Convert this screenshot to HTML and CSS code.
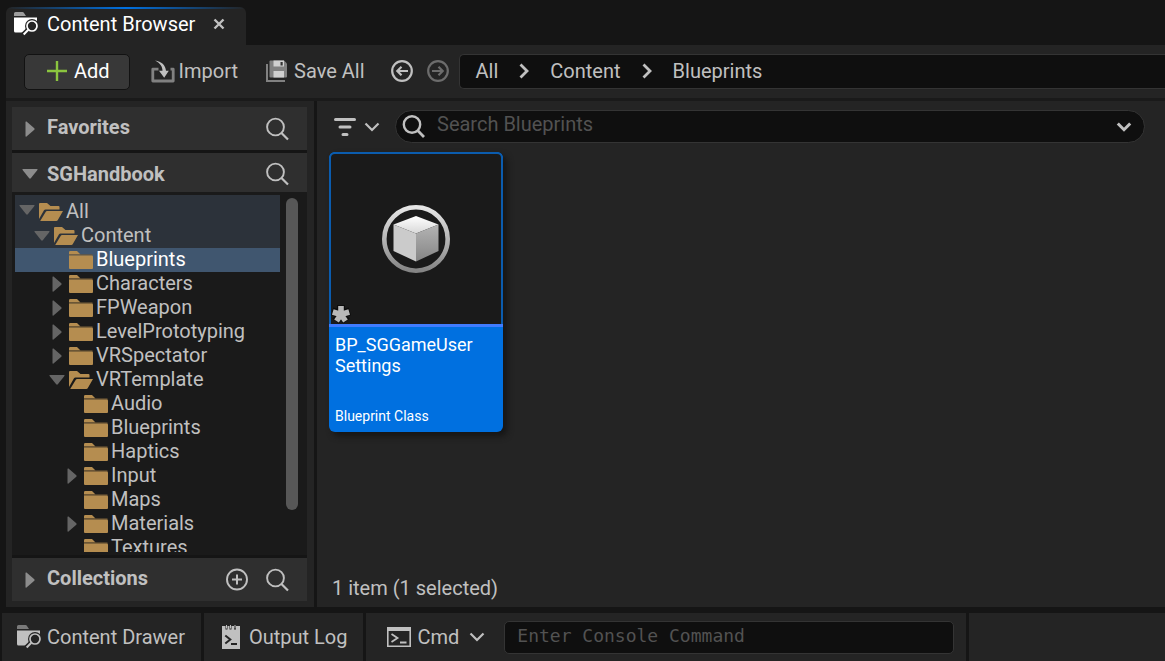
FILE: index.html
```html
<!DOCTYPE html>
<html lang="en">
<head>
<meta charset="utf-8">
<title>Content Browser</title>
<link rel="stylesheet" href="styles.css">
</head>
<body>
<svg class="sprite" aria-hidden="true">
  <defs>
    <mask id="lens-cut"><rect width="24" height="24" fill="#fff"/><circle cx="18" cy="14" r="7" fill="#000"/><path d="M14 18l-6 6" stroke="#000" stroke-width="5"/></mask>
    <linearGradient id="ring" x1="0" y1="0" x2="0" y2="1"><stop offset="0" stop-color="#e6e6e6"/><stop offset="1" stop-color="#858585"/></linearGradient>
    <linearGradient id="cube-top" x1="0" y1="0" x2="0" y2="1"><stop offset="0" stop-color="#fff"/><stop offset="1" stop-color="#d8d8d8"/></linearGradient>
    <linearGradient id="cube-side" x1="0" y1="0" x2="0" y2="1"><stop offset="0" stop-color="#b4b4b4"/><stop offset="1" stop-color="#858585"/></linearGradient>
  </defs>
  <symbol id="i-browser" viewBox="0 0 24 24">
    <path d="M0 4V1.500Q0 0 1.500 0H8.500Q9.500 0 10 1L12 4z" fill="currentColor" opacity=".55"/>
    <path d="M0 5.500H23V8Q24 20.500 9 20.500H1.500Q0 20.500 0 19z" fill="currentColor" mask="url(#lens-cut)"/>
    <circle cx="18" cy="14" r="5" fill="none" stroke="currentColor" stroke-width="1.700"/>
    <path d="M14.300 17.700L9.700 22.500" stroke="currentColor" stroke-width="2"/>
  </symbol>
  <symbol id="i-search" viewBox="0 0 24 24">
    <circle cx="10.500" cy="10" r="8.400" fill="none" stroke="currentColor" stroke-width="1.900"/>
    <path d="M16.500 16l6.500 6.500" stroke="currentColor" stroke-width="2.200"/>
  </symbol>
  <symbol id="i-search-bold" viewBox="0 0 24 24">
    <circle cx="11" cy="9.500" r="8.200" fill="none" stroke="currentColor" stroke-width="2.400"/>
    <path d="M16.700 15.500l6.300 6.500" stroke="currentColor" stroke-width="2.700"/>
  </symbol>
  <symbol id="i-right" viewBox="0 0 16 16"><path d="M3.500 1Q3.500 0 4.500 .6L12.300 7.200Q13 8 12.300 8.800L4.500 15.400Q3.500 16 3.500 15z" fill="currentColor"/></symbol>
  <symbol id="i-down" viewBox="0 0 16 16"><path d="M1 3Q0 3 .6 4L7.200 12.300Q8 13 8.800 12.300L15.400 4Q16 3 15 3z" fill="currentColor"/></symbol>
  <symbol id="i-folder" viewBox="0 0 24 18">
    <path d="M0 3.400V1.200Q0 0 1.200 0H8L11.500 3.400z" fill="#b58d50"/>
    <path d="M0 3.400H23.500V4.600H0z" fill="#6e5836"/>
    <path d="M0 4.600H23Q24 4.600 24 5.600V17Q24 18 23 18H1Q0 18 0 17z" fill="#b58d50"/>
  </symbol>
  <symbol id="i-folder-open" viewBox="0 0 24 18">
    <path d="M0 16V1Q0 0 1 0H8L11.500 3H19.500Q20.500 3 20.500 4V6.500H6.500Q5.500 6.500 5 7.300z" fill="#b58d50"/>
    <path d="M1.200 18L6.800 8.800Q7.200 8 8 8H24L18.700 17.200Q18.200 18 17.400 18z" fill="#b58d50"/>
  </symbol>
  <symbol id="i-chevron" viewBox="0 0 16 10"><path d="M1.500 1.500L8 8l6.500-6.500" fill="none" stroke="currentColor" stroke-width="2.200"/></symbol>
  <symbol id="i-chevron-bold" viewBox="0 0 16 10"><path d="M1.800 1.500L8 7.700l6.200-6.200" fill="none" stroke="currentColor" stroke-width="3"/></symbol>
</svg>

<div class="app">
  <header class="tabs">
    <div class="tab">
      <svg class="icon24"><use href="#i-browser"/></svg>
      <span class="tab-title">Content Browser</span>
      <button class="tab-close" aria-label="Close tab"><svg class="close-icon" viewBox="0 0 12 12"><path d="M1.500 1.500l9 9M10.500 1.500l-9 9" stroke="currentColor" stroke-width="2.400"/></svg></button>
    </div>
  </header>

  <div class="toolbar">
    <button class="add"><svg class="plus" viewBox="0 0 20 20"><path d="M10 0v20M0 10h20" stroke="#8bc53f" stroke-width="2.400"/></svg>Add</button>
    <button class="tool import">
      <svg class="icon24" viewBox="0 0 24 24"><path d="M7.500 10.200H1.800V22H22.200V10.200H19.500" fill="none" stroke="currentColor" stroke-width="2.800" stroke-linejoin="round" opacity=".6"/><path d="M4 1.500C10.500 2.500 14.500 6 15 11.800H17.800L13.200 18.800L8 11.800H11.500C11.500 7.500 9 3.800 4 1.500z" fill="currentColor"/></svg>Import
    </button>
    <button class="tool save">
      <svg class="save-icon" viewBox="0 0 22 22"><path d="M1 4V21H19" fill="none" stroke="currentColor" stroke-width="2" opacity=".6"/><path d="M3.500 1.500Q3.500 .5 4.500 .5H18L21 3.500V16.500Q21 17.500 20 17.500H4.500Q3.500 17.500 3.500 16.500z" fill="currentColor" opacity=".6"/><path d="M7.500 0.500H18V6.500H7.500zM7.500 11H18V17.500H7.500z" fill="#d0d0d0"/><path d="M14.500 2h2.200v3.500h-2.200z" fill="#333"/></svg>Save All
    </button>
    <button class="nav" aria-label="Back"><svg class="nav-icon" viewBox="0 0 22 22"><circle cx="11" cy="11" r="9.800" fill="none" stroke="currentColor" stroke-width="2.200"/><path d="M17 11H6.500M10.500 6.800L6.300 11l4.200 4.200" fill="none" stroke="currentColor" stroke-width="2.200"/></svg></button>
    <button class="nav off" aria-label="Forward"><svg class="nav-icon" viewBox="0 0 22 22"><circle cx="11" cy="11" r="9.800" fill="none" stroke="currentColor" stroke-width="2.200"/><path d="M5 11H15.500M11.500 6.800L15.700 11l-4.200 4.200" fill="none" stroke="currentColor" stroke-width="2.200"/></svg></button>
    <nav class="crumbs" aria-label="Path">
      <a href="#all">All</a>
      <svg class="crumb-sep" viewBox="0 0 10 16"><path d="M1.500 1.500L8 8l-6.500 6.500" fill="none" stroke="currentColor" stroke-width="2.800"/></svg>
      <a href="#content">Content</a>
      <svg class="crumb-sep" viewBox="0 0 10 16"><path d="M1.500 1.500L8 8l-6.500 6.500" fill="none" stroke="currentColor" stroke-width="2.800"/></svg>
      <a href="#blueprints">Blueprints</a>
    </nav>
  </div>

  <div class="panes">
    <aside class="sidebar">
      <section class="section">
        <button class="section-toggle"><svg class="arrow"><use href="#i-right"/></svg><span class="section-name">Favorites</span></button>
        <button class="section-tool" aria-label="Search favorites"><svg class="icon24"><use href="#i-search"/></svg></button>
      </section>
      <section class="section open">
        <button class="section-toggle"><svg class="arrow"><use href="#i-down"/></svg><span>SGHandbook</span></button>
        <button class="section-tool" aria-label="Search folders"><svg class="icon24"><use href="#i-search"/></svg></button>
      </section>
      <div class="tree-pane">
        <ul class="tree" role="tree">
          <li class="row first parent" role="treeitem"><svg class="arrow"><use href="#i-down"/></svg><span class="entry"><svg class="folder"><use href="#i-folder-open"/></svg>All</span></li>
          <li class="row l1 parent" role="treeitem"><svg class="arrow"><use href="#i-down"/></svg><span class="entry"><svg class="folder"><use href="#i-folder-open"/></svg>Content</span></li>
          <li class="row l2 selected" role="treeitem"><span class="arrow"></span><span class="entry"><svg class="folder"><use href="#i-folder"/></svg>Blueprints</span></li>
          <li class="row l2" role="treeitem"><svg class="arrow"><use href="#i-right"/></svg><span class="entry"><svg class="folder"><use href="#i-folder"/></svg>Characters</span></li>
          <li class="row l2" role="treeitem"><svg class="arrow"><use href="#i-right"/></svg><span class="entry"><svg class="folder"><use href="#i-folder"/></svg>FPWeapon</span></li>
          <li class="row l2" role="treeitem"><svg class="arrow"><use href="#i-right"/></svg><span class="entry"><svg class="folder"><use href="#i-folder"/></svg>LevelPrototyping</span></li>
          <li class="row l2" role="treeitem"><svg class="arrow"><use href="#i-right"/></svg><span class="entry"><svg class="folder"><use href="#i-folder"/></svg>VRSpectator</span></li>
          <li class="row l2" role="treeitem"><svg class="arrow"><use href="#i-down"/></svg><span class="entry"><svg class="folder"><use href="#i-folder-open"/></svg>VRTemplate</span></li>
          <li class="row l3" role="treeitem"><span class="arrow"></span><span class="entry"><svg class="folder"><use href="#i-folder"/></svg>Audio</span></li>
          <li class="row l3" role="treeitem"><span class="arrow"></span><span class="entry"><svg class="folder"><use href="#i-folder"/></svg>Blueprints</span></li>
          <li class="row l3" role="treeitem"><span class="arrow"></span><span class="entry"><svg class="folder"><use href="#i-folder"/></svg>Haptics</span></li>
          <li class="row l3" role="treeitem"><svg class="arrow"><use href="#i-right"/></svg><span class="entry"><svg class="folder"><use href="#i-folder"/></svg>Input</span></li>
          <li class="row l3" role="treeitem"><span class="arrow"></span><span class="entry"><svg class="folder"><use href="#i-folder"/></svg>Maps</span></li>
          <li class="row l3" role="treeitem"><svg class="arrow"><use href="#i-right"/></svg><span class="entry"><svg class="folder"><use href="#i-folder"/></svg>Materials</span></li>
          <li class="row l3" role="treeitem"><span class="arrow"></span><span class="entry"><svg class="folder"><use href="#i-folder"/></svg>Textures</span></li>
        </ul>
        <div class="scrollbar"><div class="thumb"></div></div>
      </div>
      <section class="section last">
        <button class="section-toggle"><svg class="arrow"><use href="#i-right"/></svg><span class="section-name">Collections</span></button>
        <button class="section-tool" aria-label="Add collection"><svg class="icon24" viewBox="0 0 24 24"><circle cx="12" cy="11.500" r="10" fill="none" stroke="currentColor" stroke-width="1.900"/><path d="M12 6.500v10M7 11.500h10" stroke="currentColor" stroke-width="2"/></svg></button>
        <button class="section-tool" aria-label="Search collections"><svg class="icon24"><use href="#i-search"/></svg></button>
      </section>
    </aside>

    <main class="assets">
      <div class="filter-row">
        <button class="filter" aria-label="Filters">
          <svg class="filter-icon" viewBox="0 0 22 18"><path d="M1.500 1.500h19M6 9h10M9 16.500h4" stroke="currentColor" stroke-width="3" stroke-linecap="round"/></svg>
          <svg class="chevron"><use href="#i-chevron"/></svg>
        </button>
        <div class="search">
          <svg class="icon24"><use href="#i-search-bold"/></svg>
          <input class="search-input" type="text" placeholder="Search Blueprints" aria-label="Search Blueprints">
          <button class="search-menu" aria-label="Search options"><svg class="chevron"><use href="#i-chevron-bold"/></svg></button>
        </div>
      </div>
      <div class="grid">
        <article class="card">
          <div class="preview">
            <svg class="class-icon" viewBox="0 0 68 68"><circle cx="34" cy="34" r="31.700" fill="none" stroke="url(#ring)" stroke-width="4.600"/><path d="M34 11L56.500 19.500L34 28.500L11.500 19.500z" fill="url(#cube-top)"/><path d="M11.500 19.500L34 28.500V56.500L11.500 46z" fill="#cbcbcb"/><path d="M56.500 19.500L34 28.500V56.500L56.500 46z" fill="url(#cube-side)"/></svg>
            <svg class="dirty" viewBox="0 0 20 20"><g stroke="#0c0c0c" stroke-width="8" stroke-linecap="square"><path d="M10 10V5M10 10L5 8.500M10 10L15 8.500M10 10L7 14M10 10L13 14"/></g><g stroke="#b8b8b8" stroke-width="5.600"><path d="M10 10.500V2M10 10.500L1.800 8M10 10.500L18.200 8M10 10.500L5.500 17M10 10.500L14.500 17"/></g></svg>
          </div>
          <div class="info">
            <span class="asset-name">BP_SGGameUser<br>Settings</span>
            <span class="asset-type">Blueprint Class</span>
          </div>
        </article>
      </div>
      <p class="count">1 item (1 selected)</p>
    </main>
  </div>

  <footer class="status">
    <button class="cell drawer"><svg class="icon24"><use href="#i-browser"/></svg>Content Drawer</button>
    <button class="cell log"><svg class="log-icon" viewBox="0 0 18 24"><path d="M0 1H3.500V4.500H5.500V1H7.500V4.500H9.500V1H12V4.500H14V1H18V24H0z" fill="currentColor"/><path d="M4.500 0v3.500M8.500 0v3.500M13 0v3.500" stroke="currentColor"/><path d="M3.300 10.500l5 4-5 4M9 19h6" fill="none" stroke="#242424" stroke-width="2"/></svg>Output Log</button>
    <div class="cell console">
      <button class="cmd"><svg class="cmd-icon" viewBox="0 0 24 20"><path d="M.8 .8H23.200V19.200H.8z" fill="none" stroke="currentColor" stroke-width="1.600"/><path d="M0 0H24V4H0z" fill="currentColor"/><path d="M4.500 7l6 4-6 4M13 15.500h6.500" fill="none" stroke="currentColor" stroke-width="1.800"/></svg>Cmd<svg class="chevron"><use href="#i-chevron"/></svg></button>
      <input class="console-input" type="text" placeholder="Enter Console Command" aria-label="Console command">
    </div>
    <div class="cell rest"></div>
  </footer>
</div>
</body>
</html>
```
FILE: styles.css
```css
* { box-sizing: border-box; }
body { margin: 0; background: #151515; color: #c0c0c0; font: 20px/24px Roboto, sans-serif; }
button { display: flex; align-items: center; padding: 0; border: 0; background: none; color: inherit; font: inherit; }
input { min-width: 0; padding: 0; border: 0; outline: 0; background: none; color: #c0c0c0; font: inherit; }
svg { display: block; flex: none; }
.sprite { position: absolute; width: 0; height: 0; }
.icon24 { width: 24px; height: 24px; }
.chevron { width: 16px; height: 10px; }
.arrow { flex: none; width: 16px; height: 16px; }

.app { display: flex; flex-direction: column; height: 100vh; overflow: hidden; }

.tabs { display: flex; padding: 7px 0 0 6px; }
.tab { display: flex; align-items: center; height: 38px; padding: 0 21px 4px 8px; border-radius: 6px 6px 0 0; background: linear-gradient(90deg, #242424, #0070e0 50%, #242424) top / 100% 2px no-repeat #242424; color: #fff; }
.tab-title { margin-left: 9px; }
.tab-close { margin-left: 18px; color: #c0c0c0; }
.close-icon { width: 12px; height: 12px; }

.toolbar { display: flex; align-items: center; height: 56px; margin-left: 6px; padding-left: 18px; border-bottom: 3px solid #1a1a1a; background: #242424; }
.add { gap: 7px; height: 36px; padding: 0 19px 2px 22px; border: 1px solid #121212; border-radius: 5px; background: #383838; color: #fff; }
.plus { width: 20px; height: 20px; }
.tool, .nav { padding-bottom: 2px; }
.import { gap: 4px; margin-left: 21px; }
.save { gap: 6px; margin-left: 28px; }
.save-icon { width: 22px; height: 22px; }
.nav { margin-left: 14px; }
.off { color: #6c6c6c; }
.save + .nav { margin-left: 26px; }
.nav-icon { width: 22px; height: 22px; }
.crumbs { display: flex; flex: 1; align-items: center; gap: 21px; height: 35px; margin-left: 10px; padding: 0 0 2px 16px; border: solid #343434; border-width: 1px 0 1px 1px; border-radius: 5px 0 0 5px; background: #0f0f0f; }
.crumbs a { color: inherit; text-decoration: none; }
.crumb-sep { width: 10px; height: 16px; }

.panes { display: flex; flex: 1; gap: 3px; min-height: 0; margin-left: 6px; }
.sidebar { display: flex; flex-direction: column; width: 308px; padding: 6px 7px 6px 6px; background: #242424; }
.section { display: flex; flex: none; align-items: center; gap: 16px; height: 46px; padding: 0 18px 0 10px; border-bottom: 3px solid #151515; background: #2f2f2f; font-weight: 700; }
.section-toggle { flex: 1; gap: 9px; }
.section-name { padding-bottom: 3px; }
.section .arrow { color: #8c8c8c; }
.open { height: 39px; padding-top: 2px; border: 0; }
.last { height: 43px; border: 0; }
.tree-pane { display: flex; flex: 1; min-height: 0; padding: 3px 9px 3px 3px; border-bottom: 3px solid #151515; background: #1a1a1a; }
.tree { flex: 1; margin: 0; padding: 0; overflow: hidden; list-style: none; }
.row { display: flex; align-items: center; gap: 4px; height: 24px; padding-left: 4px; }
.row .arrow { color: #656565; }
.first { height: 29px; }
.first .entry { height: 29px; padding-top: 5px; }
.l1 { padding-left: 19px; }
.l2 { padding-left: 34px; }
.l3 { padding-left: 49px; }
.entry { display: flex; align-items: flex-start; gap: 3px; height: 24px; line-height: 22px; }
.folder { width: 24px; height: 18px; margin-top: 3px; }
.parent { background: #2c323a; }
.selected { background: #40566f; color: #fff; }
.scrollbar { width: 12px; margin-left: 6px; padding-top: 3px; }
.thumb { height: 88%; border-radius: 6px; background: #575757; }

.assets { display: flex; flex: 1; flex-direction: column; min-width: 0; padding: 9px 20px 7px 12px; background: #242424; }
.filter-row { display: flex; align-items: center; gap: 15px; }
.filter { gap: 8px; padding-left: 5px; }
.filter-icon { width: 22px; height: 18px; }
.search { display: flex; flex: 1; align-items: center; height: 33px; padding: 0 12px 0 5px; border: 1px solid #343434; border-radius: 17px; background: #0f0f0f; }
.search-input { flex: 1; height: 28px; margin-left: 12px; padding-bottom: 5px; }
input::placeholder { color: #525252; opacity: 1; }
.grid { display: flex; flex: 1; align-items: flex-start; padding-top: 9px; }
.card { width: 174px; overflow: hidden; border-radius: 6px; background: #0070e0; box-shadow: 4px 4px 6px #151515; color: #fff; }
.preview { position: relative; display: flex; align-items: center; justify-content: center; height: 172px; border: 2px solid #0b5cae; border-bottom: 0; border-radius: 6px 6px 0 0; background: #1a1a1a; }
.class-icon { width: 68px; height: 68px; }
.dirty { position: absolute; left: 0; bottom: 0; width: 20px; height: 20px; }
.info { display: flex; flex-direction: column; justify-content: space-between; height: 108px; padding: 7px 6px 6px; border-top: 3px solid #407cff; }
.asset-name { font-size: 18px; line-height: 21px; }
.asset-type { font-size: 14px; line-height: 20px; }
.count { margin: 0 0 0 3px; }

.status { display: flex; gap: 3px; height: 54px; padding: 6px 0 0 2px; }
.cell { display: flex; align-items: center; background: #242424; }
.drawer { gap: 6px; padding: 0 16px 0 15px; }
.log { gap: 9px; padding: 0 16px 0 18px; }
.log-icon { width: 18px; height: 24px; }
.console { gap: 19px; padding: 0 12px 0 21px; }
.cmd { gap: 6px; }
.cmd .chevron { margin-left: 4px; }
.cmd-icon { width: 24px; height: 20px; }
.console-input { width: 450px; height: 33px; padding: 0 12px 3px; border: 1px solid #343434; border-radius: 5px; background: #0f0f0f; font: 18px/24px "DejaVu Sans Mono", monospace; }
.rest { flex: 1; }
```
